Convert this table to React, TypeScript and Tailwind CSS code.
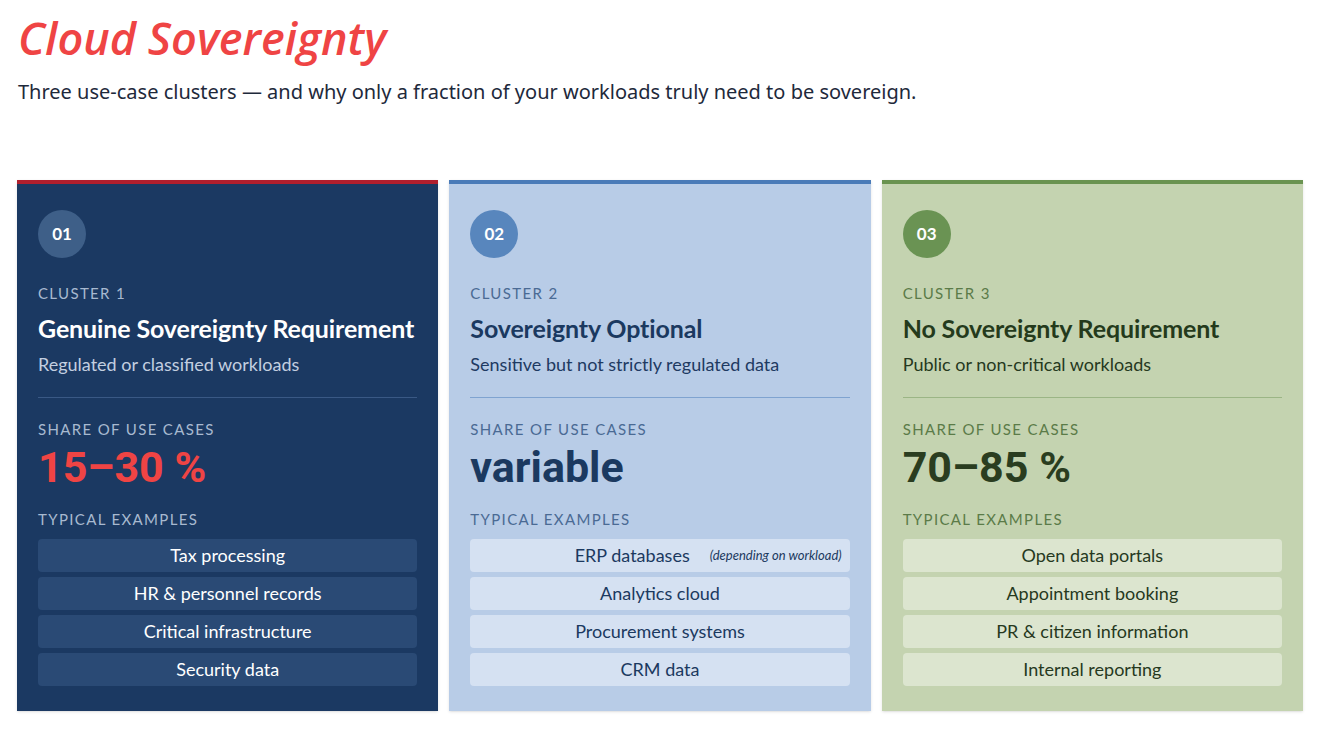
import React from 'react';

type Cluster = {
  num: string;
  label: string;
  title: string;
  subtitle: string;
  share: string;
  examples: { text: string; note?: string }[];
  card: string;
  circle: string;
  labelColor: string;
  titleColor: string;
  subColor: string;
  divider: string;
  shareColor: string;
  row: string;
  rowText: string;
};

const clusters: Cluster[] = [
  {
    num: '01',
    label: 'CLUSTER 1',
    title: 'Genuine Sovereignty Requirement',
    subtitle: 'Regulated or classified workloads',
    share: '15–30 %',
    examples: [
      { text: 'Tax processing' },
      { text: 'HR & personnel records' },
      { text: 'Critical infrastructure' },
      { text: 'Security data' },
    ],
    card: 'bg-[#1b3962] border-[#b01f2d]',
    circle: 'bg-[#3e5f88]',
    labelColor: 'text-[#a8b9d0]',
    titleColor: 'text-white',
    subColor: 'text-[#c3cfe0]',
    divider: 'border-[#3a5985]',
    shareColor: 'text-[#ef4444]',
    row: 'bg-[#2a4a75]',
    rowText: 'text-white',
  },
  {
    num: '02',
    label: 'CLUSTER 2',
    title: 'Sovereignty Optional',
    subtitle: 'Sensitive but not strictly regulated data',
    share: 'variable',
    examples: [
      { text: 'ERP databases', note: '(depending on workload)' },
      { text: 'Analytics cloud' },
      { text: 'Procurement systems' },
      { text: 'CRM data' },
    ],
    card: 'bg-[#b8cce7] border-[#4a7bb8]',
    circle: 'bg-[#5886bd]',
    labelColor: 'text-[#4a6a94]',
    titleColor: 'text-[#1b3960]',
    subColor: 'text-[#1e3a62]',
    divider: 'border-[#7fa3d0]',
    shareColor: 'text-[#1b3960]',
    row: 'bg-[#d5e1f2]',
    rowText: 'text-[#1b3960]',
  },
  {
    num: '03',
    label: 'CLUSTER 3',
    title: 'No Sovereignty Requirement',
    subtitle: 'Public or non-critical workloads',
    share: '70–85 %',
    examples: [
      { text: 'Open data portals' },
      { text: 'Appointment booking' },
      { text: 'PR & citizen information' },
      { text: 'Internal reporting' },
    ],
    card: 'bg-[#c4d3b0] border-[#6a9350]',
    circle: 'bg-[#6a9353]',
    labelColor: 'text-[#5b7b48]',
    titleColor: 'text-[#243a1c]',
    subColor: 'text-[#26391e]',
    divider: 'border-[#9bb585]',
    shareColor: 'text-[#2a3d20]',
    row: 'bg-[#dce5cf]',
    rowText: 'text-[#26391e]',
  },
];

const ClusterCard: React.FC<{ c: Cluster }> = ({ c }) => (
  <div className={`border-t-4 ${c.card} px-[21px] pt-[26px] pb-[25px] shadow-sm font-['Lato',sans-serif]`}>
    <div className={`w-12 h-12 rounded-full ${c.circle} flex items-center justify-center text-white text-[17px] font-bold`}>
      {c.num}
    </div>
    <div className={`mt-[25px] text-[15px] leading-5 tracking-[0.09em] ${c.labelColor}`}>{c.label}</div>
    <div className={`mt-[9px] text-[25px] leading-8 font-bold whitespace-nowrap tracking-[-0.005em] ${c.titleColor}`}>{c.title}</div>
    <div className={`mt-2 text-[18px] leading-6 ${c.subColor}`}>{c.subtitle}</div>
    <div className={`mt-[21px] border-t ${c.divider}`} />
    <div className={`mt-[21px] text-[15px] leading-5 tracking-[0.09em] ${c.labelColor}`}>SHARE OF USE CASES</div>
    <div className={`mt-1 font-['Roboto',sans-serif] text-[43px] leading-[48px] font-bold ${c.shareColor}`}>{c.share}</div>
    <div className={`mt-[18px] text-[15px] leading-5 tracking-[0.09em] ${c.labelColor}`}>TYPICAL EXAMPLES</div>
    <div className="mt-[10px] flex flex-col gap-[5px]">
      {c.examples.map((e) =>
        e.note ? (
          <div key={e.text} className={`h-[33px] rounded-sm ${c.row} ${c.rowText} flex items-center justify-end pr-2`}>
            <span className="text-[18px]">{e.text}</span>
            <span className="ml-5 text-[13px] italic">{e.note}</span>
          </div>
        ) : (
          <div key={e.text} className={`h-[33px] rounded-sm ${c.row} ${c.rowText} flex items-center justify-center text-[18px]`}>
            {e.text}
          </div>
        )
      )}
    </div>
  </div>
);

export default function App() {
  return (
    <div className="min-h-screen bg-white font-['Noto_Sans',sans-serif]">
      <div className="px-[18px] pt-[8px]">
        <h1 className="font-['Open_Sans',sans-serif] italic font-semibold text-[45px] leading-[60px] text-[#ef4444]">
          Cloud Sovereignty
        </h1>
        <p className="mt-[10px] text-[20px] leading-7 text-[#1e293b]">
          Three use-case clusters — and why only a fraction of your workloads truly need to be sovereign.
        </p>
      </div>
      <div className="grid grid-cols-3 gap-[11px] px-[17px] mt-[74px]">
        {clusters.map((c) => (
          <ClusterCard key={c.num} c={c} />
        ))}
      </div>
    </div>
  );
}
